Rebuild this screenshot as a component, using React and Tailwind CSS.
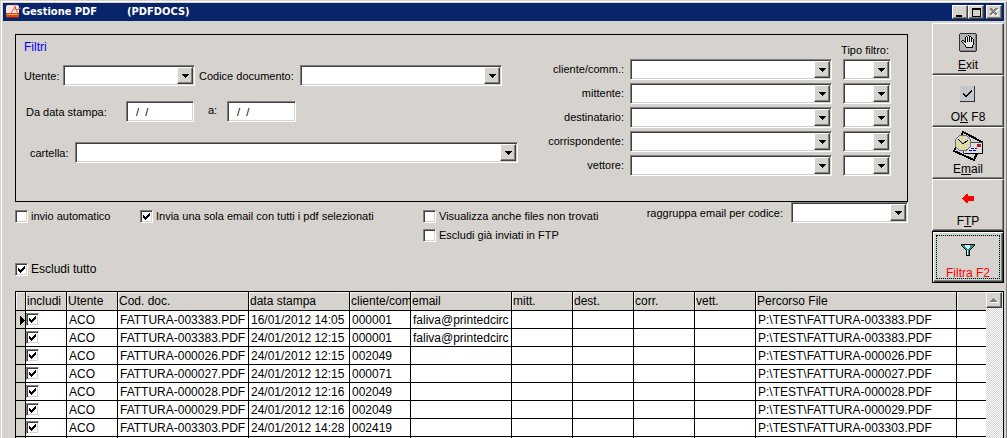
import { useState } from "react";

const rows = [
  { doc: "FATTURA-003383.PDF", date: "16/01/2012 14:05", client: "000001", email: "faliva@printedcirc" },
  { doc: "FATTURA-003383.PDF", date: "24/01/2012 12:15", client: "000001", email: "faliva@printedcirc" },
  { doc: "FATTURA-000026.PDF", date: "24/01/2012 12:15", client: "002049", email: "" },
  { doc: "FATTURA-000027.PDF", date: "24/01/2012 12:15", client: "000071", email: "" },
  { doc: "FATTURA-000028.PDF", date: "24/01/2012 12:16", client: "002049", email: "" },
  { doc: "FATTURA-000029.PDF", date: "24/01/2012 12:16", client: "002049", email: "" },
  { doc: "FATTURA-003303.PDF", date: "24/01/2012 14:28", client: "002419", email: "" },
];

const columns = [
  { label: "", width: "w-[10px]" },
  { label: "includi", width: "w-[41px]" },
  { label: "Utente", width: "w-[51px]" },
  { label: "Cod. doc.", width: "w-[131px]" },
  { label: "data stampa", width: "w-[101px]" },
  { label: "cliente/com", width: "w-[61px]" },
  { label: "email", width: "w-[101px]" },
  { label: "mitt.", width: "w-[61px]" },
  { label: "dest.", width: "w-[61px]" },
  { label: "corr.", width: "w-[61px]" },
  { label: "vett.", width: "w-[61px]" },
  { label: "Percorso File", width: "w-[201px]" },
  { label: "", width: "" },
];

const recipients = ["cliente/comm.:", "mittente:", "destinatario:", "corrispondente:", "vettore:"];

const sunken =
  "border border-t-[#808080] border-l-[#808080] border-b-white border-r-white shadow-[inset_1px_1px_#404040,inset_-1px_-1px_#d6d3ce] bg-white";
const raised =
  "border border-t-white border-l-white border-b-[#404040] border-r-[#404040] shadow-[inset_-1px_-1px_#808080] bg-[#d6d3ce]";

function Combo({ id, label, className }) {
  return (
    <div className={`relative h-[21px] ${className}`}>
      <select id={id} aria-label={label} className={`block w-full h-full appearance-none outline-none px-1 ${sunken}`} />
      <span className={`absolute top-[2px] bottom-[2px] right-[2px] w-4 flex items-center justify-center pointer-events-none ${raised}`}>
        <svg width="7" height="4" shapeRendering="crispEdges">
          <path d="M0 0h7v1H0zM1 1h5v1H1zM2 2h3v1H2zM3 3h1v1H3z" />
        </svg>
      </span>
    </div>
  );
}

function Check({ label, defaultChecked = false, ariaLabel, className = "" }) {
  return (
    <label className={`flex items-center gap-[3px] whitespace-nowrap ${className}`}>
      <span className="relative w-[13px] h-[13px] shrink-0">
        <input
          type="checkbox"
          defaultChecked={defaultChecked}
          aria-label={ariaLabel}
          className={`peer block w-[13px] h-[13px] appearance-none ${sunken}`}
        />
        <svg
          width="7"
          height="7"
          shapeRendering="crispEdges"
          className="absolute top-[3px] left-[3px] hidden peer-checked:block pointer-events-none"
        >
          <path d="M0 2h1v3H0zM1 3h1v3H1zM2 4h1v3H2zM3 3h1v3H3zM4 2h1v3H4zM5 1h1v3H5zM6 0h1v3H6z" />
        </svg>
      </span>
      {label}
    </label>
  );
}

function DateField({ id, className }) {
  return <input id={id} type="text" defaultValue="  /  /" className={`h-[21px] pl-[3px] whitespace-pre outline-none ${sunken} ${className}`} />;
}

function AppIcon() {
  return (
    <svg width="16" height="16" viewBox="0 0 16 16">
      <rect x="0" y="1" width="13" height="12" rx="2" fill="#f3e4de" />
      <path d="M0 9h13v2q0 3-3 3H3q-3 0-3-3z" fill="#d8481c" />
      <path d="M1 10h11v1H1z" fill="#f0a24a" />
      <path d="M2 13h9v1H2z" fill="#8a1f10" />
      <path d="M5 9L9 3l1 3 5-2M9 0v4l3 5" fill="none" stroke="#e2564a" />
    </svg>
  );
}

function HandIcon() {
  return (
    <svg width="18" height="19" viewBox="0 0 18 19" shapeRendering="crispEdges">
      <path d="M1 0h16v1h1v17h-1v1H1v-1H0V1h1z" fill="#303030" />
      <path d="M1 1h16v17H1z" fill="#848284" />
      <path d="M1 1h15v16H1z" fill="#b5b2b5" />
      <path d="M7 4h2V3h2v1h2v1h2v6h-1v3H7v-1H6v-1H5v-1H4v-1H3V9h2v1h2z" fill="#e7e7e7" />
      <path d="M6 4h1v6H6zM7 3h1v1H7zM8 4h1v5H8zM9 2h1v1H9zM10 3h1v6h-1zM11 3h1v1h-1zM12 4h1v5h-1zM13 5h1v1h-1zM14 6h1v6h-1zM13 12h1v3h-1zM7 14h6v1H7zM6 12h1v2H6zM5 11h1v1H5zM4 10h1v1H4zM3 9h1v1H3zM2 8h1v1H2zM3 7h2v1H3zM5 8h1v1H5z" />
    </svg>
  );
}

function OkIcon() {
  return (
    <svg width="16" height="16" viewBox="0 0 16 16" shapeRendering="crispEdges">
      <path d="M0 0h15v15H0z" fill="#c6c6ce" />
      <path d="M14 0h1v16h-1zM0 15h15v1H0z" fill="#303038" />
      <path d="M3 7h1v2H3zM4 8h1v2H4zM5 9h1v2H5zM6 9h1v2H6zM7 8h1v2H7zM8 7h1v2H8zM9 6h1v2H9zM10 5h1v2h-1zM11 4h1v2h-1z" />
    </svg>
  );
}

function EmailIcon() {
  return (
    <svg width="31" height="31" viewBox="0 0 31 31" shapeRendering="crispEdges">
      <path d="M10 1l19 10-8 18L1 20z" fill="#d6d3ce" stroke="#000" strokeWidth="2" />
      <path d="M10 11h19v11H10z" fill="#dedede" stroke="#505050" />
      <path d="M29 12h1v11H12v-1h17z" fill="#000" />
      <path d="M24 13h4v3h-4z" fill="#e00000" />
      <path d="M26 13h1v3h-1z" fill="#4060c0" />
      <path d="M18 17h3v1h-3zM22 17h2v1h-2zM16 19h3v1h-3zM20 19h3v1h-3z" fill="#0000a0" />
      <circle cx="10" cy="12" r="8" fill="#d6d3ce" stroke="#707070" />
      <circle cx="10" cy="12" r="6" fill="none" stroke="#ffff00" strokeWidth="1" strokeDasharray="1 2" />
      <circle cx="10" cy="12" r="4" fill="none" stroke="#ffff00" strokeWidth="1" strokeDasharray="1 2" />
      <path d="M10 16h1v1h-1zM8 14h1v1H8zM12 14h1v1h-1z" fill="#ffff00" />
      <path d="M5 8l5 5 5-4" fill="none" stroke="#000" strokeWidth="1" />
    </svg>
  );
}

function ArrowIcon() {
  return (
    <svg width="12" height="9" viewBox="0 0 12 9" shapeRendering="crispEdges">
      <path d="M0 4h1V3h1V2h1V1h1V0h2v2h6v5H6v2H4V8H3V7H2V6H1V5H0z" fill="#ff0000" />
    </svg>
  );
}

function FunnelIcon() {
  return (
    <svg width="14" height="12" viewBox="0 0 14 12" shapeRendering="crispEdges">
      <path d="M0 0h14v2h-1v1h-1v1h-1v1h-1v1H9v6H5V6H4V5H3V4H2V3H1V2H0z" />
      <path d="M1 1h12v1h-1v1h-1v1h-1v1H9v1H8v5H6V6H5V5H4V4H3V3H2V2H1z" fill="#109c9c" />
      <path d="M4 1h5v3H8v1H6V4H5V3H4zM6 6h1v5H6z" fill="#e8f4f4" />
    </svg>
  );
}

function ToolButton({ icon, children, active }) {
  return (
    <button
      className={`relative h-[52px] flex flex-col items-center text-[12px] leading-[14px] pt-[2px] bg-[#d6d3ce] ${
        active
          ? "text-[#ff0000] border border-black shadow-[inset_1px_1px_#ffffff,inset_-1px_-1px_#404040,inset_-2px_-2px_#808080]"
          : "border border-t-white border-l-white border-b-[#404040] border-r-[#404040] shadow-[inset_-1px_-1px_#808080]"
      }`}
    >
      <span className="h-8 flex items-center justify-center">{icon}</span>
      <span>{children}</span>
      {active && (
        <span className="absolute inset-[3px] border border-[#7fdcdc]">
          <span className="absolute -inset-px border border-dotted border-black" />
        </span>
      )}
    </button>
  );
}

function TitleBar() {
  const box = `h-[14px] w-4 flex items-center justify-center ${raised}`;
  return (
    <header className="h-[18px] shrink-0 flex items-center pl-[3px] pr-[2px] bg-[#08246b] text-white">
      <AppIcon />
      <h1 className="flex-1 whitespace-pre font-bold text-[11px] leading-[18px] font-['DejaVu_Sans_Condensed','Noto_Sans',sans-serif]">
        <span>Gestione PDF</span>
        <span className="pl-[30px]">(PDFDOCS)</span>
      </h1>
      <button aria-label="Riduci a icona" className={box}>
        <svg width="10" height="9" shapeRendering="crispEdges"><path d="M1 7h6v2H1z" /></svg>
      </button>
      <button aria-label="Ingrandisci" className={box}>
        <svg width="9" height="9" shapeRendering="crispEdges"><path d="M0 0h9v9H0zM1 2v6h7V2z" fillRule="evenodd" /></svg>
      </button>
      <button aria-label="Chiudi" className={`${box} ml-[2px]`}>
        <svg width="9" height="8" shapeRendering="crispEdges">
          <path d="M1 1l7 7M8 1L1 8" stroke="#fff" strokeWidth="2" />
          <path d="M0 0l7 7M7 0L0 7" stroke="#808080" strokeWidth="2" />
        </svg>
      </button>
    </header>
  );
}

function Filters() {
  return (
    <section className="h-[168px] flex justify-between border border-black">
      <div className="flex-1 max-w-[502px] pl-2">
        <h2 className="pt-1 text-[12px] leading-4 text-[#0000ff]">Filtri</h2>
        <div className="mt-[10px] flex items-center">
          <label htmlFor="utente" className="w-[39px]">Utente:</label>
          <Combo id="utente" className="w-[132px]" />
          <label htmlFor="codice" className="w-[105px] pl-[4px] whitespace-nowrap">Codice documento:</label>
          <Combo id="codice" className="flex-1 mr-4" />
        </div>
        <div className="mt-[15px] flex items-center">
          <label htmlFor="da" className="w-[102px] pl-[2px] whitespace-nowrap">Da data stampa:</label>
          <DateField id="da" className="w-[68px]" />
          <label htmlFor="al" className="w-[33px] pl-[14px] pb-1">a:</label>
          <DateField id="al" className="w-[69px]" />
        </div>
        <div className="mt-5 flex items-center">
          <label htmlFor="cartella" className="w-[51px] pl-[6px]">cartella:</label>
          <Combo id="cartella" className="flex-1" />
        </div>
      </div>

      <div className="pt-2 pr-4">
        <p className="text-right leading-[14px] pr-[2px]">Tipo filtro:</p>
        <div className="mt-[2px] flex flex-col gap-[3px]">
          {recipients.map((label, i) => (
            <div key={label} className="flex items-center">
              <label htmlFor={`dest-${i}`} className="flex-1 pr-[6px] pb-[2px] text-right whitespace-nowrap">{label}</label>
              <Combo id={`dest-${i}`} className="w-[202px] mr-[11px]" />
              <Combo label={`Tipo filtro ${label}`} className="w-12" />
            </div>
          ))}
        </div>
      </div>
    </section>
  );
}

function Grid() {
  const [current, setCurrent] = useState(0);
  const cell = "h-[18px] p-0 pl-[2px] border-r border-b border-black overflow-hidden whitespace-nowrap";
  return (
    <div className="flex-1 min-h-0 ml-3 flex overflow-hidden border border-b-0 border-black bg-white text-[12px] leading-[14px]">
      <div className="flex-1 min-w-0">
        <table className="w-full table-fixed border-separate border-spacing-0">
          <thead>
            <tr>
              {columns.map((col, i) => (
                <th
                  key={i}
                  className={`h-[19px] p-0 pl-px text-left font-normal bg-[#d6d3ce] border-b border-r border-black last:border-r-0 overflow-hidden whitespace-nowrap shadow-[inset_1px_1px_#f4f3f0] ${col.width}`}
                >
                  {col.label}
                </th>
              ))}
            </tr>
          </thead>
          <tbody>
            {rows.map((row, i) => (
              <tr key={i} onClick={() => setCurrent(i)}>
                <td className="h-[18px] p-0 border-r border-b border-black bg-[#d6d3ce]">
                  {i === current && (
                    <svg width="5" height="9" className="ml-1 mt-[2px] block" shapeRendering="crispEdges">
                      <path d="M0 0h1v1h1v1h1v1h1v1h1v1H4v1H3v1H2v1H1v1H0z" />
                    </svg>
                  )}
                </td>
                <td className="h-[18px] p-0 border-r border-b border-black">
                  <Check defaultChecked ariaLabel={`Includi ${row.doc}`} />
                </td>
                <td className={cell}>ACO</td>
                <td className={cell}>{row.doc}</td>
                <td className={cell}>{row.date}</td>
                <td className={cell}>{row.client}</td>
                <td className={cell}>{row.email}</td>
                <td className={cell} />
                <td className={cell} />
                <td className={cell} />
                <td className={cell} />
                <td className={cell}>P:\TEST\{row.doc}</td>
                <td className="border-b border-black" />
              </tr>
            ))}
            <tr>
              {columns.map((col, i) => (
                <td key={i} className="h-[18px] p-0 border-r border-b border-black first:bg-[#d6d3ce] last:border-r-0" />
              ))}
            </tr>
          </tbody>
        </table>
      </div>
      <div className="w-[17px] bg-[repeating-conic-gradient(#d6d3ce_0_25%,#ffffff_0_50%)] bg-[length:2px_2px]">
        <button aria-label="Scorri su" className={`w-4 h-4 flex items-center justify-center ${raised}`}>
          <svg width="8" height="5" shapeRendering="crispEdges">
            <path d="M3 0h1v1h1v1h1v1h1v1H0V3h1V2h1V1h1z" fill="#808080" />
            <path d="M1 4h7v1H1z" fill="#fff" />
          </svg>
        </button>
      </div>
    </div>
  );
}

export default function App() {
  return (
    <div className="h-screen flex flex-col overflow-hidden bg-[#d6d3ce] pl-px pt-px font-['Liberation_Sans',Arial,sans-serif] text-[11px] leading-[14px] text-black">
      <div className="flex-1 min-h-0 flex flex-col border border-b-0 border-t-white border-l-white border-r-[#808080] pt-px pl-px pr-[2px]">
        <TitleBar />
        <div className="flex gap-6 pl-3">
          <main className="flex-1 pt-[13px]">
            <Filters />
            <div className="grid grid-cols-[125px_283px_1fr_auto] items-start">
              <Check label="invio automatico" className="pt-[7px]" />
              <Check label="Invia una sola email con tutti i pdf selezionati" defaultChecked className="pt-[7px]" />
              <div className="flex flex-col gap-[5px] pt-[7px]">
                <Check label="Visualizza anche files non trovati" />
                <Check label="Escludi già inviati in FTP" />
              </div>
              <div className="flex items-center">
                <label htmlFor="raggruppa" className="pr-2 whitespace-nowrap">raggruppa email per codice:</label>
                <Combo id="raggruppa" className="w-[117px]" />
              </div>
            </div>
            <Check label="Escludi tutto" defaultChecked className="mt-5 text-[12px]" />
          </main>
          <nav className="w-[72px] mt-[2px] mb-2 flex flex-col">
            <ToolButton icon={<HandIcon />}><u>E</u>xit</ToolButton>
            <ToolButton icon={<OkIcon />}>O<u>K</u> F8</ToolButton>
            <ToolButton icon={<EmailIcon />}>E<u>m</u>ail</ToolButton>
            <ToolButton icon={<ArrowIcon />}>F<u>T</u>P</ToolButton>
            <ToolButton icon={<FunnelIcon />} active>Filt<u>r</u>a F2</ToolButton>
          </nav>
        </div>
        <Grid />
      </div>
    </div>
  );
}
